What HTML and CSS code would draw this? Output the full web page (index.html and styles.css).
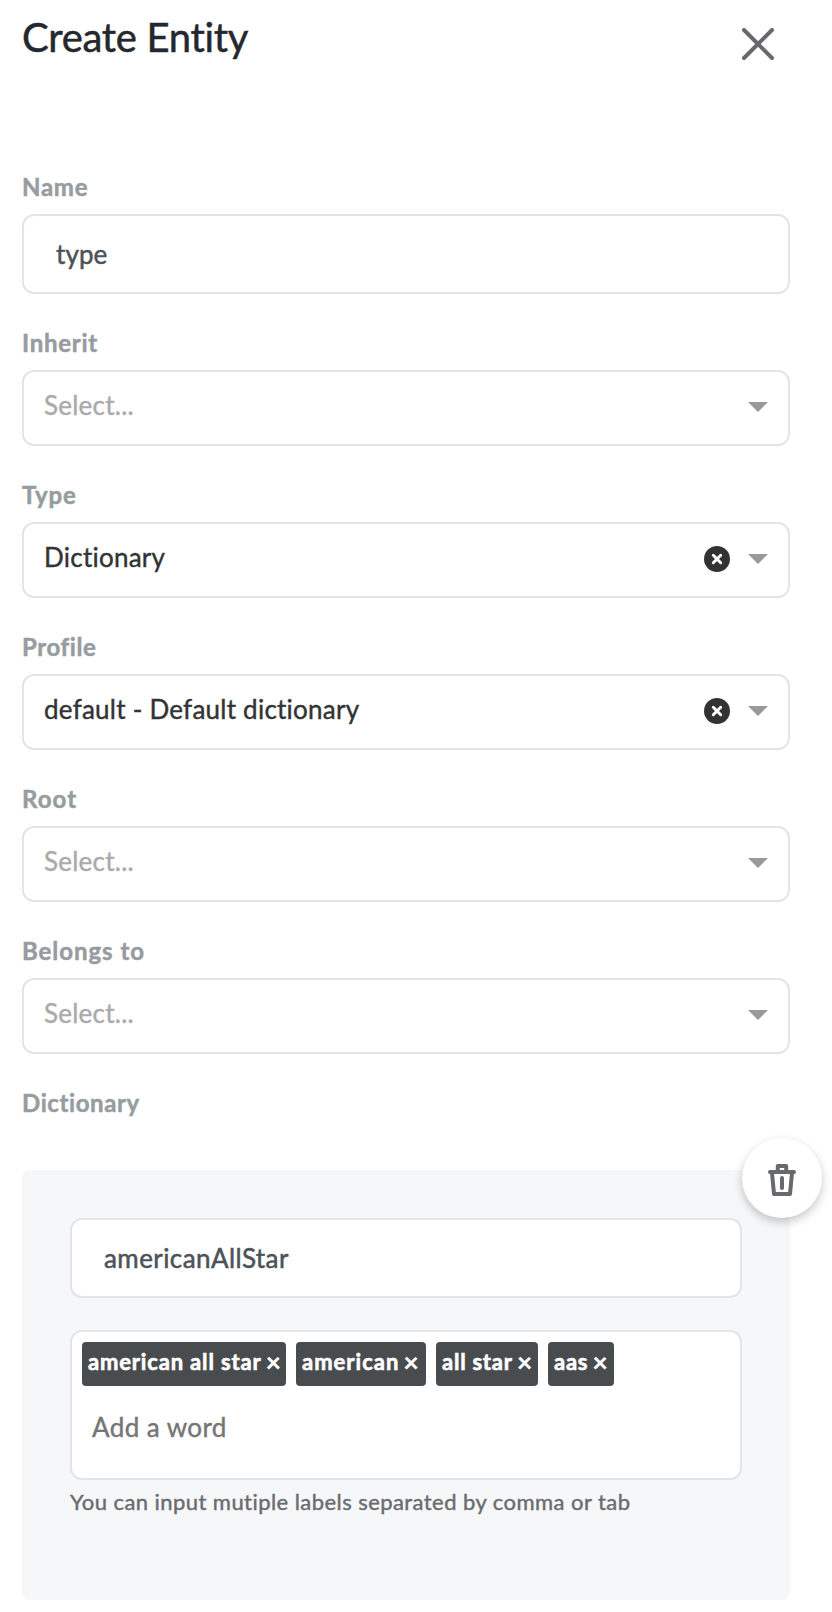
FILE: index.html
```html
<!DOCTYPE html>
<html lang="en">
<head>
<meta charset="utf-8">
<title>Create Entity</title>
<link rel="stylesheet" href="styles.css">
</head>
<body>
<main class="panel">
  <header class="header">
    <h1 class="title">Create Entity</h1>
    <svg class="close" width="32" height="32" viewBox="0 0 32 32"><path d="M2 2 30 30M30 2 2 30"/></svg>
  </header>

  <section class="field">
    <div class="label">Name</div>
    <div class="input"><span class="t-type">type</span></div>
  </section>

  <section class="field">
    <div class="label">Inherit</div>
    <div class="select"><span class="value placeholder">Select...</span><i class="arrow"></i></div>
  </section>

  <section class="field">
    <div class="label">Type</div>
    <div class="select"><span class="value v-dict">Dictionary</span>
      <svg class="clear" width="26" height="26" viewBox="0 0 26 26"><circle cx="13" cy="13" r="13"/><path d="M9.3 9.3 16.7 16.7M16.7 9.3 9.3 16.7"/></svg>
      <i class="arrow"></i></div>
  </section>

  <section class="field">
    <div class="label l-profile">Profile</div>
    <div class="select"><span class="value v-default">default - Default dictionary</span>
      <svg class="clear" width="26" height="26" viewBox="0 0 26 26"><circle cx="13" cy="13" r="13"/><path d="M9.3 9.3 16.7 16.7M16.7 9.3 9.3 16.7"/></svg>
      <i class="arrow"></i></div>
  </section>

  <section class="field">
    <div class="label l-root">Root</div>
    <div class="select"><span class="value placeholder">Select...</span><i class="arrow"></i></div>
  </section>

  <section class="field">
    <div class="label l-belongs">Belongs to</div>
    <div class="select"><span class="value placeholder">Select...</span><i class="arrow"></i></div>
  </section>

  <section class="field">
    <div class="label l-dict">Dictionary</div>
    <div class="dictionary">
      <div class="trash">
        <svg width="28" height="32" viewBox="0 0 28 32"><path d="M2 8H26M9.8 8V2H18.2V8"/><path d="M4 9 6 30H22L24 9"/><path d="M14 14V24"/></svg>
      </div>
      <div class="input"><span class="t-star">americanAllStar</span></div>
      <div class="tags">
        <div class="tag-row">
          <span class="tag g1">american all star <b>×</b></span>
          <span class="tag g2">american <b>×</b></span>
          <span class="tag g3">all star <b>×</b></span>
          <span class="tag g4">aas <b>×</b></span>
        </div>
        <div class="add"><span>Add a word</span></div>
      </div>
      <div class="help"><span>You can input mutiple labels separated by comma or tab</span></div>
    </div>
  </section>
</main>
</body>
</html>
```
FILE: styles.css
```css
* { box-sizing: border-box; }
body { margin: 0; background: #fff; font-family: Lato, "Open Sans", sans-serif; font-variant-ligatures: none; }
.panel { width: 832px; height: 1612px; padding: 0 42px 0 22px; overflow: hidden; }
.header { display: flex; justify-content: space-between; height: 171px; padding: 13px 16px 0 0; }
.title { margin: 0; font-size: 40px; line-height: 48px; font-weight: 400; letter-spacing: -.32px; color: #24282c; -webkit-text-stroke: .5px #24282c; white-space: nowrap; }
.close { margin-top: 15px; fill: none; stroke: #67696c; stroke-width: 4; stroke-linecap: round; }
.field { margin-bottom: 33px; }
.label { height: 32px; margin-bottom: 11px; font-size: 24px; line-height: 32px; font-weight: 700; letter-spacing: .75px; color: #969c9f; -webkit-text-stroke: .5px #969c9f; white-space: nowrap; }
.l-root { letter-spacing: 1.1px; }
.l-belongs { letter-spacing: .95px; }
.l-dict, .l-profile { letter-spacing: .6px; }
.input { height: 80px; padding-left: 32px; border: 2px solid #e1e5e9; border-radius: 12px; background: #fff; font-size: 26px; line-height: 76px; color: #4b5258; -webkit-text-stroke: .5px #4b5258; white-space: nowrap; }
.t-type { letter-spacing: .1px; }
.t-star { letter-spacing: .42px; }
.select { display: flex; height: 76px; padding: 0 20px; border: 2px solid #e1e5e9; border-radius: 12px; background: #fff; }
.value { margin-right: auto; font-size: 26px; line-height: 66px; letter-spacing: .24px; color: #333; -webkit-text-stroke: .4px currentColor; white-space: nowrap; }
.placeholder { color: #aaa; }
.clear { margin: 22px 18px 0 0; }
.clear circle { fill: #333; }
.clear path { stroke: #fff; stroke-width: 3; stroke-linecap: round; }
.arrow { width: 20px; height: 10px; margin-top: 30px; background: #999; clip-path: polygon(0 0, 100% 0, 50% 100%); }
.dictionary { position: relative; height: 430px; margin-top: 51px; padding: 48px; border-radius: 8px; background: #f5f7f9; }
.trash { position: absolute; top: -32px; right: -32px; display: flex; align-items: center; justify-content: center; width: 80px; height: 80px; padding-top: 4px; border-radius: 50%; background: #fff; box-shadow: 0 4px 10px rgba(0, 0, 0, .22); }
.trash svg { fill: none; stroke: #67696c; stroke-width: 4; stroke-linecap: round; stroke-linejoin: round; }
.tags { height: 150px; margin-top: 32px; padding: 10px; border: 2px solid #e1e5e9; border-radius: 12px; background: #fff; }
.tag-row { display: flex; gap: 10px; }
.tag { display: flex; gap: 4px; height: 44px; padding-left: 6px; border-radius: 4px; background: #494c4e; color: #fff; font-size: 22px; line-height: 40px; font-weight: 700; letter-spacing: .75px; -webkit-text-stroke: .6px #fff; white-space: nowrap; }
.tag b { font-size: 27px; letter-spacing: 0; -webkit-text-stroke: 0; }
.g1 { width: 204px; letter-spacing: .83px; }
.g2 { width: 130px; letter-spacing: 1px; }
.g3 { width: 102px; }
.g4 { width: 66px; }
.add { padding-left: 10px; margin-top: 20px; font-size: 26px; line-height: 42px; letter-spacing: .42px; color: #757575; -webkit-text-stroke: .4px #757575; white-space: nowrap; }
.help { margin-top: 6px; font-size: 22px; line-height: 32px; letter-spacing: .44px; color: #696b6e; -webkit-text-stroke: .4px #696b6e; white-space: nowrap; }
```
